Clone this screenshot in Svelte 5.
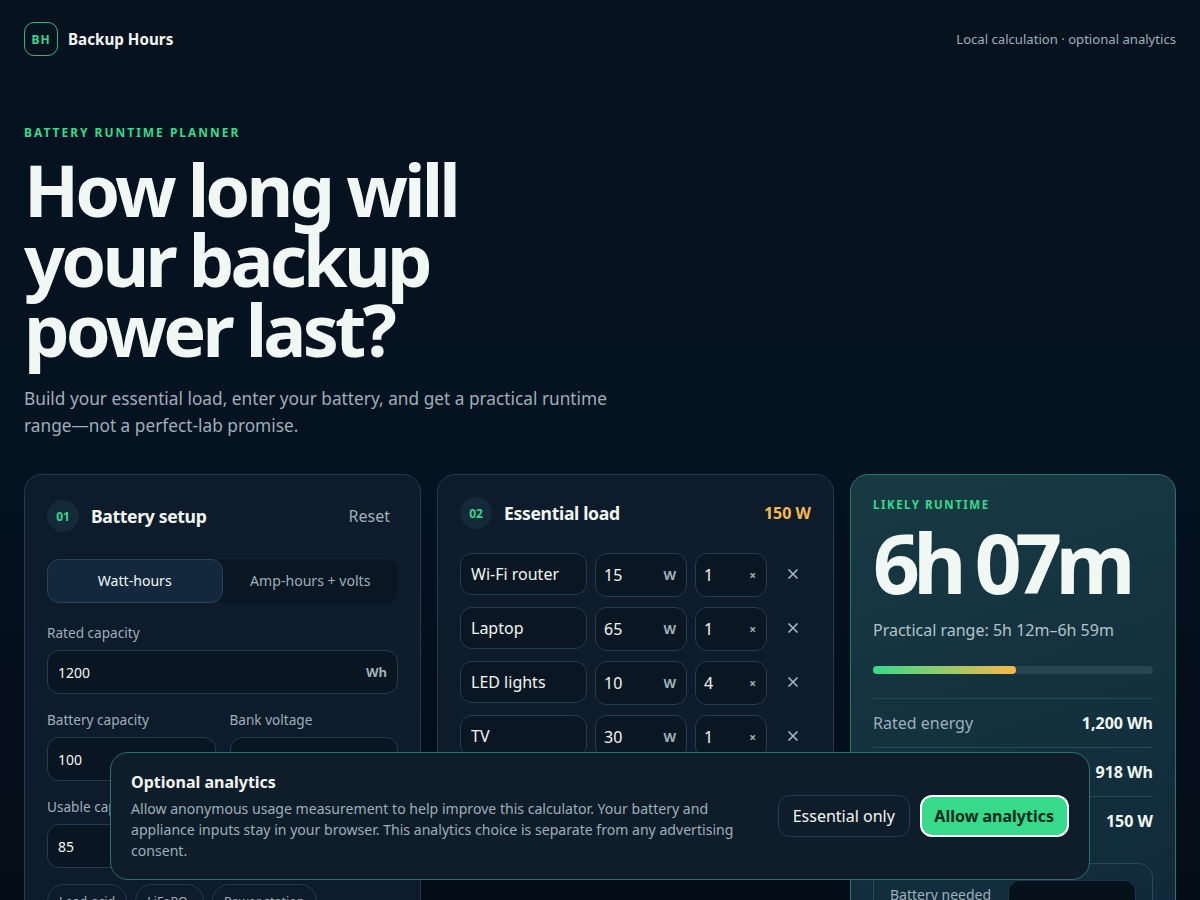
<script>
  const loads = [
    { name: "Wi-Fi router", watts: 15, qty: 1 },
    { name: "Laptop", watts: 65, qty: 1 },
    { name: "LED lights", watts: 10, qty: 4 },
    { name: "TV", watts: 30, qty: 1 }
  ];
  const chips = ["Lead-acid", "LiFePO₄", "Power station"];
  const stats = [
    { label: "Rated energy", value: "1,200 Wh" },
    { label: "Usable energy", value: "918 Wh" },
    { label: "Essential load", value: "150 W" }
  ];
</script>

<div class="page">
  <header class="top">
    <div class="brand">
      <span class="logo">BH</span>
      <strong>Backup Hours</strong>
    </div>
    <span class="note">Local calculation · optional analytics</span>
  </header>

  <section class="hero">
    <p class="eyebrow">BATTERY RUNTIME PLANNER</p>
    <h1>How long will<br />your backup<br />power last?</h1>
    <p class="lead">Build your essential load, enter your battery, and get a practical runtime range—not a perfect-lab promise.</p>
  </section>

  <main class="grid">
    <section class="card">
      <div class="head tall">
        <span class="step">01</span>
        <h2>Battery setup</h2>
        <button class="reset">Reset</button>
      </div>
      <div class="segment">
        <button class="seg on">Watt-hours</button>
        <button class="seg">Amp-hours + volts</button>
      </div>
      <div class="field">
        <span class="lbl">Rated capacity</span>
        <div class="box"><input value="1200" /><b>Wh</b></div>
      </div>
      <div class="pair">
        <div class="field">
          <span class="lbl">Battery capacity</span>
          <div class="box"><input value="100" /><b>Ah</b></div>
        </div>
        <div class="field">
          <span class="lbl">Bank voltage</span>
          <div class="box"><input value="12" /><b>V</b></div>
        </div>
      </div>
      <div class="field">
        <span class="lbl">Usable capacity</span>
        <div class="box"><input value="85" /><b>%</b></div>
      </div>
      <div class="chips">
        {#each chips as chip}
          <button class="chip">{chip}</button>
        {/each}
      </div>
    </section>

    <section class="card">
      <div class="head">
        <span class="step">02</span>
        <h2>Essential load</h2>
        <span class="total">150 W</span>
      </div>
      <div class="rows">
        {#each loads as load}
          <div class="load">
            <input class="name" value={load.name} />
            <div class="mini"><input value={load.watts} /><b>W</b></div>
            <div class="mini"><input value={load.qty} /><b class="times">×</b></div>
            <button class="remove" aria-label="Remove {load.name}">
              <svg width="12" height="12" viewBox="0 0 12 12"><path d="M1.5 1.5l9 9M10.5 1.5l-9 9" /></svg>
            </button>
          </div>
        {/each}
      </div>
    </section>

    <aside class="card result">
      <p class="eyebrow small">LIKELY RUNTIME</p>
      <div class="time">6h 07m</div>
      <p class="range">Practical range: 5h 12m–6h 59m</p>
      <div class="bar"><span style="width: 51%"></span></div>
      <dl>
        {#each stats as stat}
          <div class="stat">
            <dt>{stat.label}</dt>
            <dd>{stat.value}</dd>
          </div>
        {/each}
      </dl>
      <div class="needed">
        <span>Battery needed</span>
        <select><option>Current load</option></select>
      </div>
    </aside>
  </main>
</div>

<div class="consent">
  <div class="copy">
    <strong>Optional analytics</strong>
    <p>Allow anonymous usage measurement to help improve this calculator. Your battery and appliance inputs stay in your browser. This analytics choice is separate from any advertising consent.</p>
  </div>
  <div class="actions">
    <button class="ghost">Essential only</button>
    <button class="allow">Allow analytics</button>
  </div>
</div>

<style>
  :global(html) {
    background: #040c16;
  }

  :global(body) {
    margin: 0;
    color: #f1f7f3;
    font-family: "Noto Sans", sans-serif;
    background: linear-gradient(180deg, #07121f 0, #051220 50%, #030b15 100%);
  }

  .page {
    width: 1152px;
    margin: 0 auto;
  }

  .top {
    display: flex;
    align-items: center;
    justify-content: space-between;
    height: 78px;
  }

  .brand {
    display: flex;
    align-items: center;
    gap: 10px;
  }

  .brand strong {
    font-size: 15.2px;
    font-weight: 700;
  }

  .logo {
    box-sizing: border-box;
    display: grid;
    place-items: center;
    width: 34px;
    height: 34px;
    border: 1px solid #2fb87a;
    border-radius: 10px;
    color: #37d98b;
    font-size: 12px;
    font-weight: 700;
    letter-spacing: 0.08em;
  }

  .note {
    color: #9db0bb;
    font-size: 13.12px;
  }

  .hero {
    padding-top: 47px;
  }

  .eyebrow {
    margin: 0;
    color: #37d98b;
    font-size: 12px;
    font-weight: 700;
    letter-spacing: 0.165em;
    line-height: 16px;
  }

  h1 {
    margin: 13px 0 0;
    font-size: 72px;
    font-weight: 700;
    line-height: 70px;
    letter-spacing: -0.053em;
  }

  .lead {
    max-width: 620px;
    margin: 21px 0 0;
    color: #9db0bb;
    font-size: 17.28px;
    line-height: 27px;
  }

  .grid {
    display: grid;
    grid-template-columns: minmax(0, 1fr) minmax(0, 1fr) 326px;
    gap: 16px;
    align-items: start;
    margin-top: 35px;
  }

  .card {
    box-sizing: border-box;
    padding: 22px;
    border: 1px solid #263a4b;
    border-radius: 18px;
    background: #0d1b2a;
  }

  .head {
    display: flex;
    align-items: center;
    gap: 12px;
    height: 32px;
    margin-bottom: 24px;
  }

  .head.tall {
    height: 38px;
  }

  .step {
    display: grid;
    place-items: center;
    flex: none;
    width: 32px;
    height: 32px;
    border-radius: 50%;
    background: #14293a;
    color: #37d98b;
    font-size: 12px;
    font-weight: 700;
  }

  h2 {
    flex: 1;
    margin: 0;
    font-size: 17.6px;
    font-weight: 700;
    letter-spacing: -0.02em;
  }

  .reset {
    padding: 0 8px;
    border: 0;
    background: none;
    color: #9db0bb;
    font: inherit;
    font-size: 16px;
  }

  .total {
    color: #f6b94a;
    font-size: 16px;
    font-weight: 700;
  }

  .segment {
    display: grid;
    grid-template-columns: 1fr 1fr;
    height: 44px;
    margin-bottom: 20px;
    border-radius: 12px;
    background: #0a1722;
  }

  .seg {
    padding: 0 0 2px;
    border: 1px solid transparent;
    border-radius: 12px;
    background: none;
    color: #9db0bb;
    font: inherit;
    font-size: 14.08px;
  }

  .seg.on {
    border-color: #2a4256;
    background: #13283d;
    color: #f1f7f3;
  }

  .field {
    margin-bottom: 16px;
  }

  .lbl {
    display: block;
    margin-bottom: 8px;
    color: #9db0bb;
    font-size: 13.6px;
    line-height: 19px;
  }

  .box,
  .mini {
    box-sizing: border-box;
    display: flex;
    align-items: center;
    height: 44px;
    border: 1px solid #263b4c;
    border-radius: 12px;
    background: #091520;
  }

  .box {
    padding: 0 10px;
  }

  .box b,
  .mini b {
    color: #9db0bb;
    font-size: 13px;
    font-weight: 700;
  }

  input {
    width: 100%;
    min-width: 0;
    padding: 0;
    border: 0;
    outline: 0;
    background: none;
    color: #f1f7f3;
    font: inherit;
    font-size: 14px;
  }

  .pair {
    display: grid;
    grid-template-columns: 1fr 1fr;
    gap: 14px;
  }

  .chips {
    display: flex;
    gap: 8px;
  }

  .chip {
    height: 34px;
    padding: 0 11px;
    border: 1px solid #263b4c;
    border-radius: 17px;
    background: none;
    color: #9db0bb;
    font: inherit;
    font-size: 12.48px;
  }

  .rows {
    display: grid;
    gap: 10px;
  }

  .load {
    display: grid;
    grid-template-columns: 127px 92px 72px 36px;
    gap: 8px;
    align-items: start;
  }

  .name {
    box-sizing: border-box;
    height: 42px;
    padding: 0 10px;
    border: 1px solid #263b4c;
    border-radius: 12px;
    background: #0a1622;
    font-size: 16px;
  }

  .mini {
    padding: 0 10px 0 8px;
    background: #0a1622;
  }

  .mini input {
    font-size: 16px;
  }

  .mini .times {
    font-size: 12px;
  }

  .remove {
    display: grid;
    place-items: center;
    height: 42px;
    padding: 0;
    border: 0;
    background: none;
  }

  .remove path {
    fill: none;
    stroke: #a8b8c2;
    stroke-width: 1.6;
  }

  .result {
    border-color: #2c7564;
    background: linear-gradient(160deg, #173a42 0, #10283a 100%);
  }

  .eyebrow.small {
    font-size: 11.52px;
    line-height: 16px;
    letter-spacing: 0.132em;
  }

  .time {
    margin-top: 8px;
    font-size: 82px;
    font-weight: 700;
    line-height: 83px;
    letter-spacing: -0.08em;
  }

  .range {
    margin: 14px 0 0;
    color: #b4c4ca;
    font-size: 16px;
    line-height: 24px;
  }

  .bar {
    height: 8px;
    margin: 24px 0;
    border-radius: 4px;
    background: #2a4450;
  }

  .bar span {
    display: block;
    height: 100%;
    border-radius: 4px;
    background: linear-gradient(90deg, #37d98b, #f6b94a);
  }

  dl {
    margin: 0;
  }

  .stat {
    display: flex;
    align-items: center;
    justify-content: space-between;
    height: 48px;
    border-top: 1px solid #27495a;
  }

  dt {
    color: #9db0bb;
    font-size: 16px;
  }

  dd {
    margin: 0;
    font-size: 16px;
    font-weight: 700;
  }

  .needed {
    display: flex;
    gap: 16px;
    margin-top: 18px;
    padding: 16px;
    border: 1px solid #27495a;
    border-radius: 14px;
    color: #9db0bb;
    font-size: 14px;
  }

  .needed span {
    flex: 1;
    padding-top: 5px;
  }

  select {
    flex: none;
    appearance: none;
    width: 128px;
    height: 44px;
    padding: 9px 10px 0;
    border: 1px solid #1f3444;
    border-radius: 12px;
    background: #07111c;
    color: #f1f7f3;
    font: inherit;
    font-size: 16px;
  }

  .consent {
    position: fixed;
    left: 110px;
    bottom: 20px;
    box-sizing: border-box;
    display: flex;
    align-items: center;
    justify-content: space-between;
    gap: 24px;
    width: 980px;
    padding: 18px 20px;
    border: 1px solid #2c7564;
    border-radius: 18px;
    background: #0f1c2a;
  }

  .copy strong {
    display: block;
    font-size: 16px;
    font-weight: 700;
    line-height: 22px;
  }

  .copy p {
    max-width: 620px;
    margin: 5px 0 0;
    color: #9db0bb;
    font-size: 14.08px;
    line-height: 21px;
  }

  .actions {
    display: flex;
    flex: none;
    gap: 10px;
  }

  .actions button {
    height: 42px;
    padding: 0 14.5px 0 13.5px;
    border-radius: 12px;
    font: inherit;
    font-size: 16px;
  }

  .ghost {
    border: 1px solid #263b4c;
    background: none;
    color: #f1f7f3;
  }

  .actions .allow {
    padding: 0 13px 0 12px;
    border: 2px solid #fff;
    background: #37d98b;
    color: #06291a;
    font-weight: 700;
  }
</style>
